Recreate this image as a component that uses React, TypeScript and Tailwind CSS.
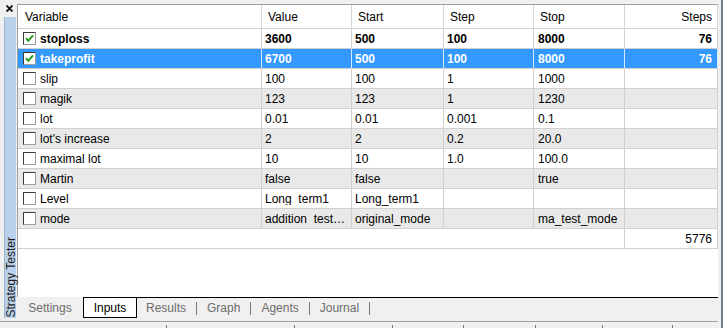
import React from 'react';

type Row = {
  name: string;
  checked?: boolean;
  selected?: boolean;
  value: string;
  start: string;
  step: string;
  stop: string;
  steps?: string;
};

const rows: Row[] = [
  { name: 'stoploss', checked: true, value: '3600', start: '500', step: '100', stop: '8000', steps: '76' },
  { name: 'takeprofit', checked: true, selected: true, value: '6700', start: '500', step: '100', stop: '8000', steps: '76' },
  { name: 'slip', value: '100', start: '100', step: '1', stop: '1000' },
  { name: 'magik', value: '123', start: '123', step: '1', stop: '1230' },
  { name: 'lot', value: '0.01', start: '0.01', step: '0.001', stop: '0.1' },
  { name: "lot's increase", value: '2', start: '2', step: '0.2', stop: '20.0' },
  { name: 'maximal lot', value: '10', start: '10', step: '1.0', stop: '100.0' },
  { name: 'Martin', value: 'false', start: 'false', step: '', stop: 'true' },
  { name: 'Level', value: 'Long_term1', start: 'Long_term1', step: '', stop: '' },
  { name: 'mode', value: 'addition_test_mode', start: 'original_mode', step: '', stop: 'ma_test_mode' },
];

const COLS = 'grid grid-cols-[244px_90px_92px_90px_91px_93px]';

function CheckBox({ checked }: { checked?: boolean }) {
  return (
    <div className="w-[13px] h-[13px] shrink-0 bg-white border border-t-[#3a3a3a] border-l-[#3a3a3a] border-r-[#9c9c9c] border-b-[#9c9c9c] flex items-center justify-center">
      {checked && (
        <svg width="11" height="11" viewBox="0 0 11 11">
          <path d="M2 5.2 L4.3 7.8 L9 2.4" fill="none" stroke="#1f9a1f" strokeWidth="2" />
        </svg>
      )}
    </div>
  );
}

function DataRow({ row, index }: { row: Row; index: number }) {
  const bg = row.selected ? 'bg-[#3399ff] text-white' : index % 2 === 0 ? 'bg-white text-black' : 'bg-[#e9e9e9] text-black';
  const line = row.selected ? 'border-[#d9e9fb]' : 'border-[#d0d0d0]';
  const weight = row.checked ? 'font-bold' : '';
  const cell = `border-r ${line} flex items-center min-w-0 overflow-hidden whitespace-nowrap`;
  return (
    <div className={`${COLS} h-5 border-b border-[#d0d0d0] ${bg} ${weight}`}>
      <div className={`${cell} pl-[5px] gap-[4px]`}>
        <CheckBox checked={row.checked} />
        <span>{row.name}</span>
      </div>
      <div className={`${cell} pl-[3px] pr-[4px]`}>
        <span className="block min-w-0 truncate">{row.value}</span>
      </div>
      <div className={`${cell} pl-[3px]`}>{row.start}</div>
      <div className={`${cell} pl-[3px]`}>{row.step}</div>
      <div className={`${cell} pl-[4px]`}>{row.stop}</div>
      <div className={`${cell} justify-end pr-[5px]`}>{row.steps}</div>
    </div>
  );
}

export default function App() {
  const tabs = ['Results', 'Graph', 'Agents', 'Journal'];
  return (
    <div className="w-[723px] h-[328px] flex bg-[#f0f0f0] overflow-hidden font-['Liberation_Sans',Arial,sans-serif] text-[12px] leading-none">
      <div className="w-[718px] flex flex-col">
        <div className="h-[321px] flex">
          {/* side dock bar */}
          <div className="w-[17px] flex flex-col">
            <div className="h-[17px] flex items-center justify-center pl-[2px]">
              <svg width="7" height="7" viewBox="0 0 7 7">
                <path d="M0.5 0.5 L6.5 6.5 M6.5 0.5 L0.5 6.5" stroke="#111" strokeWidth="1.8" />
              </svg>
            </div>
            <div className="flex-1 mb-[3px] ml-[4px] w-[12px] bg-[#b9d1ea] border-l border-[#9db4cf] flex flex-col justify-end items-center pb-[1px]">
              <span className="[writing-mode:vertical-rl] rotate-180 text-[12px] text-[#1a1a1a] whitespace-nowrap">
                Strategy Tester
              </span>
            </div>
          </div>

          {/* main */}
          <div className="flex-1 flex flex-col pt-[4px]">
            <div className="flex-1 bg-white border-l border-t border-[#a0a0a0] flex flex-col">
              <div className={`${COLS} h-[24px] border-b border-[#d0d0d0] text-black`}>
                <div className="border-r border-[#d8d8d8] flex items-center pl-[7px]">Variable</div>
                <div className="border-r border-[#d8d8d8] flex items-center pl-[6px]">Value</div>
                <div className="border-r border-[#d8d8d8] flex items-center pl-[6px]">Start</div>
                <div className="border-r border-[#d8d8d8] flex items-center pl-[6px]">Step</div>
                <div className="border-r border-[#d8d8d8] flex items-center pl-[6px]">Stop</div>
                <div className="border-r border-[#d8d8d8] flex items-center justify-end pr-[5px]">Steps</div>
              </div>
              {rows.map((r, i) => (
                <DataRow key={r.name} row={r} index={i} />
              ))}
              <div className="grid grid-cols-[607px_93px] h-5 border-b border-[#d0d0d0] bg-white text-black">
                <div className="border-r border-[#d0d0d0]" />
                <div className="border-r border-[#d0d0d0] flex items-center justify-end pr-[5px]">5776</div>
              </div>
            </div>

            {/* tabs */}
            <div className="h-[21px] flex">
              <div className="w-[66px] flex items-center justify-center text-[#6d6d6d]">Settings</div>
              <div className="w-[54px] bg-white border border-black flex items-center justify-center text-black">Inputs</div>
              <div className="flex-1 border-t border-black flex items-center pl-[9px] text-[#6d6d6d]">
                {tabs.map((t) => (
                  <div key={t} className="flex items-center">
                    <span>{t}</span>
                    <span className="mx-[10px] w-px h-[13px] bg-[#7a7a7a]" />
                  </div>
                ))}
              </div>
            </div>
            <div className="h-[3px] border-r border-[#fafafa]" />
          </div>
        </div>

        {/* status strip */}
        <div className="h-px bg-[#a0a0a0]" />
        <div className="flex-1 flex items-end">
          <div className="w-[167px] h-[3px] border-r border-[#7a7a7a]" />
          <div className="w-[128px] h-[3px] border-r border-[#7a7a7a]" />
          <div className="w-[98px] h-[3px] border-r border-[#7a7a7a]" />
          <div className="w-[71px] h-[3px] border-r border-[#7a7a7a]" />
          <div className="w-[72px] h-[3px] border-r border-[#7a7a7a]" />
          <div className="w-[67px] h-[3px] border-r border-[#7a7a7a]" />
          <div className="w-[70px] h-[3px] border-r border-[#7a7a7a]" />
        </div>
      </div>
      <div className="w-[5px] border-r-2 border-[#6f7c8a]" />
    </div>
  );
}
